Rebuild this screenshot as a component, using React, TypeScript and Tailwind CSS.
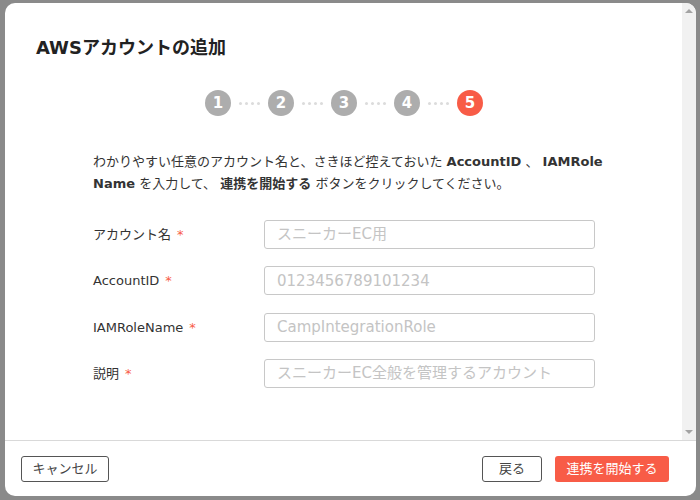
const font = { fontFamily: '"DejaVu Sans", "Noto Sans CJK JP", sans-serif' };

const fields = [
  { label: 'アカウント名', placeholder: 'スニーカーEC用' },
  { label: 'AccountID', placeholder: '0123456789101234' },
  { label: 'IAMRoleName', placeholder: 'CampIntegrationRole' },
  { label: '説明', placeholder: 'スニーカーEC全般を管理するアカウント' },
];

function Dots() {
  return (
    <div className="flex w-[37px] items-center justify-center gap-[3px]">
      {[0, 1, 2, 3].map((i) => (
        <span key={i} className="h-[3px] w-[3px] rounded-full bg-[#dcdcdc]" />
      ))}
    </div>
  );
}

function Steps() {
  const steps = [1, 2, 3, 4, 5];
  return (
    <div className="flex items-center justify-center pr-[30px]">
      {steps.map((n, i) => (
        <div key={n} className="flex items-center">
          {i > 0 && <Dots />}
          <span
            className={
              'flex h-[26px] w-[26px] items-center justify-center rounded-full text-[15px] font-bold text-white ' +
              (n === 5 ? 'bg-[#f85c47]' : 'bg-[#adadad]')
            }
          >
            {n}
          </span>
        </div>
      ))}
    </div>
  );
}

export default function App() {
  return (
    <div className="h-[500px] w-[700px] bg-[#8a8a8a] pl-[5px] pr-[4px] pt-[3px] pb-[4px]" style={font}>
      <div className="flex h-full w-full flex-col overflow-hidden rounded-[10px] bg-white">
        <div className="flex h-[438px] border-b border-[#d9d9d9]">
          <div className="flex-1 pl-[31px] pt-[33px]">
            <h1 className="text-[18px] font-bold leading-[24px] text-[#222]">AWSアカウントの追加</h1>
            <div className="mt-[30px]">
              <Steps />
            </div>
            <p className="mt-[35px] pl-[57px] pr-[60px] text-[13px] leading-[22px] text-[#333]">
              わかりやすい任意のアカウント名と、さきほど控えておいた <b>AccountID</b> 、 <b>IAMRole Name</b> を入力して、 <b>連携を開始する</b> ボタンをクリックしてください。
            </p>
            <div className="mt-[25px] flex flex-col gap-[17.4px] pl-[57px]">
              {fields.map((f) => (
                <div key={f.label} className="flex items-center">
                  <div className="w-[171px] text-[13px] text-[#333]">
                    {f.label}
                    <span className="ml-[6px] text-[#f85c47]">*</span>
                  </div>
                  <div className="flex h-[29px] w-[331px] items-center rounded-[3px] border border-[#c8c8c8] px-[12px] text-[15px] text-[#c4c4c4]">
                    {f.placeholder}
                  </div>
                </div>
              ))}
            </div>
          </div>
          <div className="flex w-[14px] flex-col items-center justify-between bg-[#f1f1f1] py-[6px]">
            <span className="h-0 w-0 border-x-[4px] border-b-[4px] border-x-transparent border-b-[#a3a3a3]" />
            <span className="h-0 w-0 border-x-[4px] border-t-[4px] border-x-transparent border-t-[#a3a3a3]" />
          </div>
        </div>
        <div className="flex flex-1 items-center pl-[16px] pr-[27px]">
          <button className="flex h-[26px] w-[88px] items-center justify-center rounded-[3px] border border-[#555] text-[13px] text-[#444]">
            キャンセル
          </button>
          <div className="ml-auto flex items-center gap-[13px]">
            <button className="flex h-[26px] w-[60px] items-center justify-center rounded-[3px] border border-[#555] text-[13px] text-[#444]">
              戻る
            </button>
            <button className="flex h-[26px] w-[114px] items-center justify-center rounded-[3px] bg-[#f85c47] text-[13px] text-white">
              連携を開始する
            </button>
          </div>
        </div>
      </div>
    </div>
  );
}
